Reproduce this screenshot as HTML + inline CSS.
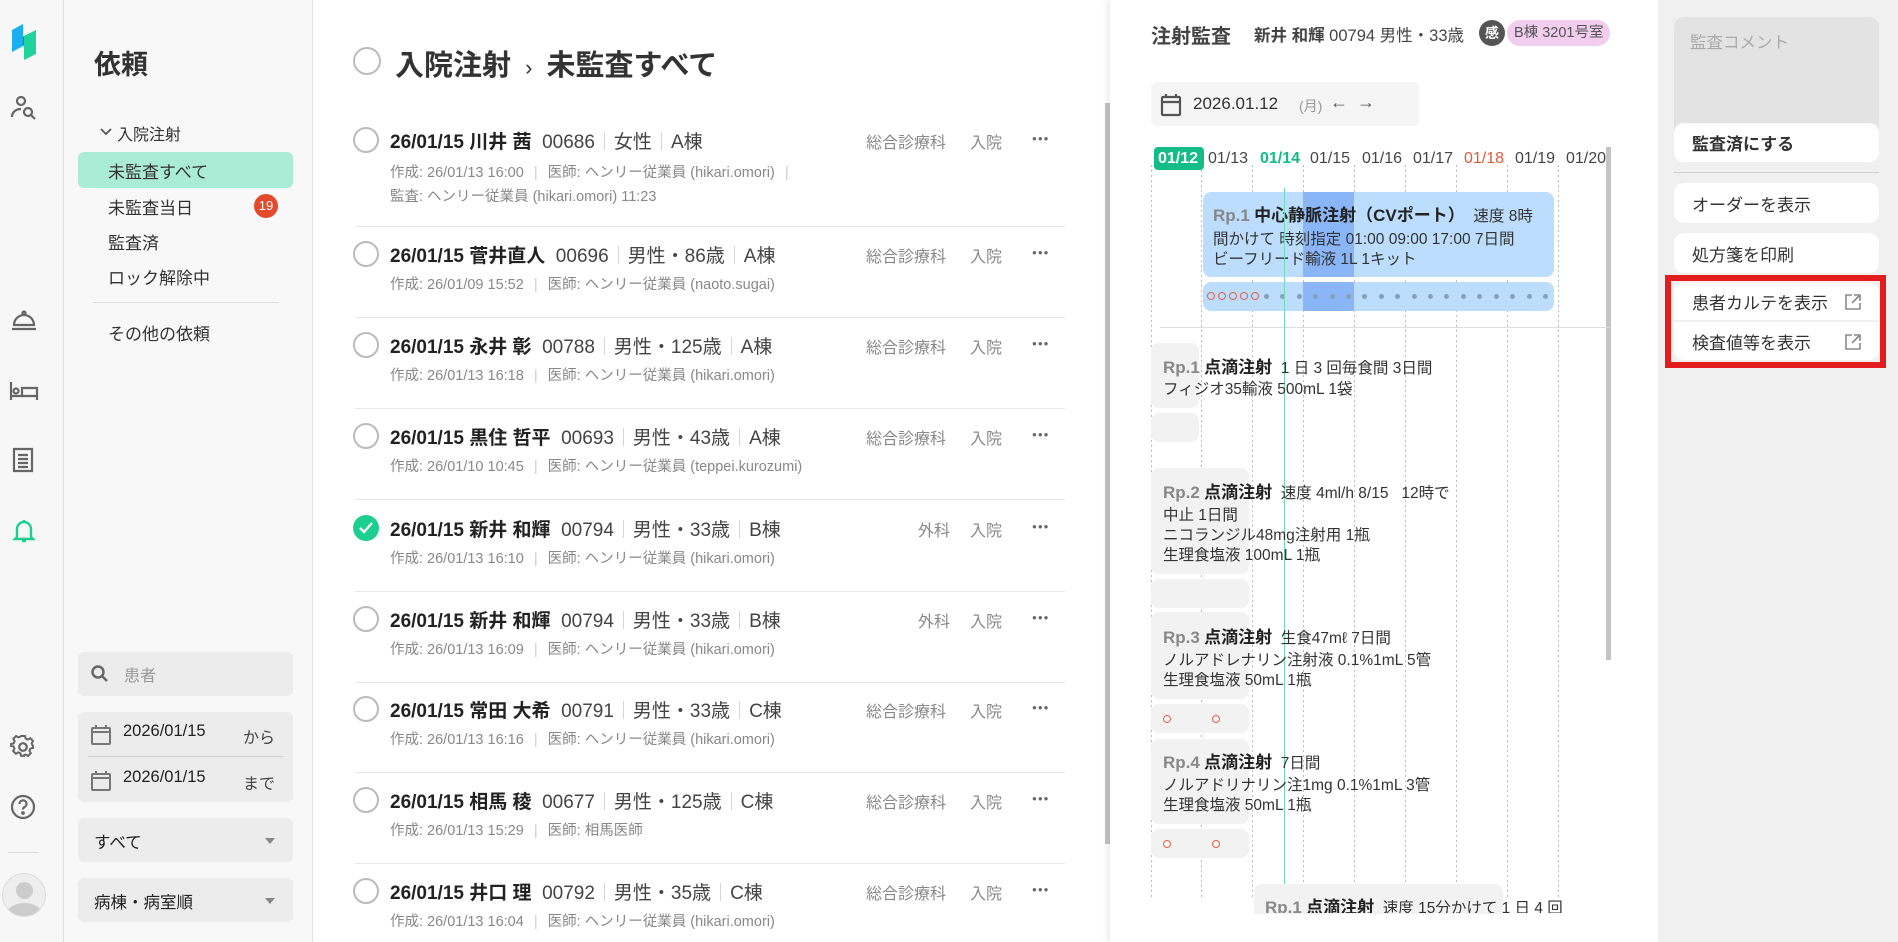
<!DOCTYPE html>
<html><head><meta charset="utf-8"><style>
*{box-sizing:border-box;margin:0;padding:0}
body{width:1898px;height:942px;overflow:hidden;font-family:"Liberation Sans","Noto Sans CJK JP",sans-serif;color:#333;background:#fff;position:relative}
.a{position:absolute;white-space:nowrap}
.rail{left:0;top:0;width:64px;height:942px;background:#f7f7f7;border-right:1px solid #e0e0e0}
.side{left:64px;top:0;width:249px;height:942px;background:#f8f8f8;border-right:1px solid #e3e3e3}
.it{font-size:17px;color:#333}
.box{background:#ececec;border-radius:6px}
.row-t{font-size:19px;font-weight:bold;color:#222}
.row-t span{font-weight:normal;color:#444}
.sep{display:inline-block;width:1px;height:18px;background:#d5d5d5;margin:0 9px;vertical-align:-2px}
.msep{color:#ccc;margin:0 6px}
.meta{font-size:14.5px;color:#888}
.hr{height:1px;background:#e8e8e8;left:355px;width:710px}
.circ{width:26px;height:26px;border:2px solid #bbb;border-radius:50%}
.dept{font-size:16px;color:#888}
.dots{font-size:8px;color:#666;letter-spacing:1px}
.dl{width:1px;top:175px;height:735px;background:repeating-linear-gradient(#bbb 0 2px,transparent 2px 5px)}
.card{background:#f2f2f2;border-radius:8px}
.ct{font-size:15.5px;color:#333}
.rp{font-weight:bold;color:#888;font-size:17px}
.rpn{font-weight:bold;color:#222;font-size:17px}
.rb{background:#fff;border-radius:10px;font-size:17px;color:#333;padding-left:18px;display:flex;align-items:center}
.oc{width:8px;height:8px;border:1.5px solid #e0604a;border-radius:50%}
.bd{width:5px;height:5px;border-radius:50%;background:#8aa0b8}
</style></head><body>
<div class="a rail"></div>
<svg class="a" style="left:11px;top:22px" width="26" height="40" viewBox="0 0 26 40"><path d="M1 8 L12 2 V24 L1 30Z" fill="#1ab0f0"/><path d="M13 14 L25 8 V32 L13 38Z" fill="#1fd39a"/><path d="M13 14 L12 14.5 V24 L13 23.5Z" fill="#168a7a"/></svg>
<svg class="a" style="left:10px;top:95px" width="28" height="26" viewBox="0 0 28 26" fill="none" stroke="#666" stroke-width="2.2"><circle cx="11" cy="6" r="4"/><path d="M2 22c0-5 4-8 9-8"/><circle cx="18" cy="17" r="4"/><path d="M21 20l4 4"/></svg>
<svg class="a" style="left:10px;top:310px" width="28" height="22" viewBox="0 0 28 22" fill="none" stroke="#666" stroke-width="2.2"><circle cx="14" cy="3" r="1.5"/><path d="M4 15a10 10 0 0 1 20 0z"/><path d="M2 19h24"/></svg>
<svg class="a" style="left:9px;top:380px" width="30" height="22" viewBox="0 0 30 22" fill="none" stroke="#666" stroke-width="2.2"><path d="M2 2v18M2 16h26M28 20V8H13v8"/><circle cx="7" cy="11" r="2.5"/></svg>
<svg class="a" style="left:12px;top:447px" width="22" height="26" viewBox="0 0 22 26" fill="none" stroke="#666" stroke-width="2.2"><path d="M2 2h18v22H2z"/><path d="M6 8h10M6 12h10M6 16h10M6 20h10"/></svg>
<svg class="a" style="left:12px;top:518px" width="24" height="26" viewBox="0 0 24 26" fill="none" stroke="#1ccf8f" stroke-width="2.4"><path d="M5 19V11a7 7 0 0 1 14 0v8l2 2H3z"/><path d="M10 23h4"/><path d="M12 2v2"/></svg>
<svg class="a" style="left:10px;top:734px" width="26" height="26" viewBox="0 0 24 24" fill="none" stroke="#666" stroke-width="2"><circle cx="12" cy="12" r="3.5"/><path d="M10 2h4l.6 2.6 2.3 1 2.3-1.4 2.8 2.8-1.4 2.3 1 2.3L22 12v2l-2.6.6-1 2.3 1.4 2.3-2.8 2.8-2.3-1.4-2.3 1L14 22h-4l-.6-2.6-2.3-1-2.3 1.4-2.8-2.8 1.4-2.3-1-2.3L0 12v-2l2.6-.6 1-2.3L2.2 4.8 5 2 7.3 3.4l2.3-1z" transform="translate(1 0) scale(.92)"/></svg>
<svg class="a" style="left:10px;top:794px" width="26" height="26" viewBox="0 0 26 26" fill="none" stroke="#666" stroke-width="2.2"><circle cx="13" cy="13" r="11"/><path d="M9.5 10a3.5 3.5 0 1 1 5 3c-1.2.6-1.5 1.3-1.5 2.5"/><circle cx="13" cy="19" r=".8" fill="#666"/></svg>
<div class="a" style="left:8px;top:852px;width:30px;height:1px;background:#ddd"></div>
<div class="a" style="left:2px;top:873px;width:44px;height:44px;border-radius:50%;background:#eee;border:1px solid #ddd;overflow:hidden"><div style="position:absolute;left:13px;top:8px;width:17px;height:17px;border-radius:50%;background:#ccc"></div><div style="position:absolute;left:4px;top:29px;width:35px;height:22px;border-radius:50%;background:#ccc"></div></div>

<div class="a side"></div>
<div class="a" style="left:94px;top:43px;font-size:27px;font-weight:bold;color:#333">依頼</div>
<svg class="a" style="left:100px;top:127px" width="12" height="10" viewBox="0 0 12 10" fill="none" stroke="#555" stroke-width="1.8"><path d="M1 2l5 5 5-5"/></svg>
<div class="a it" style="left:117px;top:121px;font-size:16px">入院注射</div>
<div class="a" style="left:78px;top:152px;width:215px;height:36px;background:#abecd6;border-radius:6px"></div>
<div class="a it" style="left:108px;top:158px">未監査すべて</div>
<div class="a it" style="left:108px;top:194px">未監査当日</div>
<div class="a" style="left:254px;top:194px;width:24px;height:24px;border-radius:50%;background:#e24a2b;color:#fff;font-size:13px;text-align:center;line-height:24px">19</div>
<div class="a it" style="left:108px;top:229px">監査済</div>
<div class="a it" style="left:108px;top:264px">ロック解除中</div>
<div class="a" style="left:93px;top:302px;width:185px;height:1px;background:#ddd"></div>
<div class="a it" style="left:108px;top:320px">その他の依頼</div>

<div class="a box" style="left:78px;top:652px;width:215px;height:44px"></div>
<svg class="a" style="left:90px;top:664px" width="20" height="20" viewBox="0 0 20 20" fill="none" stroke="#666" stroke-width="2.4"><circle cx="8" cy="8" r="5.5"/><path d="M12 12l5 5"/></svg>
<div class="a" style="left:124px;top:662px;font-size:16px;color:#999">患者</div>
<div class="a box" style="left:78px;top:712px;width:215px;height:90px"></div>
<div class="a" style="left:88px;top:756px;width:195px;height:1px;background:#d0d0d0"></div>
<svg class="a" style="left:90px;top:724px" width="22" height="22" viewBox="0 0 22 22" fill="none" stroke="#777" stroke-width="2"><rect x="2" y="4" width="18" height="16" rx="1"/><path d="M2 8h18M6 1v4M16 1v4"/></svg>
<svg class="a" style="left:90px;top:770px" width="22" height="22" viewBox="0 0 22 22" fill="none" stroke="#777" stroke-width="2"><rect x="2" y="4" width="18" height="16" rx="1"/><path d="M2 8h18M6 1v4M16 1v4"/></svg>
<div class="a" style="left:123px;top:722px;font-size:16.5px;color:#222">2026/01/15</div>
<div class="a" style="left:243px;top:724px;font-size:16px;color:#444">から</div>
<div class="a" style="left:123px;top:768px;font-size:16.5px;color:#222">2026/01/15</div>
<div class="a" style="left:243px;top:770px;font-size:16px;color:#444">まで</div>
<div class="a box" style="left:78px;top:818px;width:215px;height:44px"></div>
<div class="a" style="left:94px;top:829px;font-size:16.5px;color:#222">すべて</div>
<div class="a" style="left:265px;top:838px;border:5px solid transparent;border-top:6px solid #888"></div>
<div class="a box" style="left:78px;top:878px;width:215px;height:44px"></div>
<div class="a" style="left:94px;top:889px;font-size:16.5px;color:#222">病棟・病室順</div>
<div class="a" style="left:265px;top:898px;border:5px solid transparent;border-top:6px solid #888"></div>

<div class="a circ" style="left:353px;top:47px;width:28px;height:28px"></div>
<div class="a" style="left:395px;top:42px;font-size:29px;font-weight:bold;color:#333">入院注射 <span style="font-weight:normal;font-size:22px;margin:0 6px">›</span> 未監査すべて</div>
<div class="a" style="left:1105px;top:103px;width:5px;height:741px;background:#c4c4c4"></div>

<!-- rows -->
<div class="a circ" style="left:353px;top:127px"></div>
<div class="a row-t" style="left:390px;top:127px">26/01/15 川井 茜 <span>&nbsp;00686<i class="sep"></i>女性<i class="sep"></i>A棟</span></div>
<div class="a meta" style="left:390px;top:161px">作成: 26/01/13 16:00 <span class="msep">|</span> 医師: ヘンリー従業員 (hikari.omori) <span class="msep">|</span></div>
<div class="a meta" style="left:390px;top:185px">監査: ヘンリー従業員 (hikari.omori) 11:23</div>
<div class="a hr" style="top:226px"></div>

<div class="a circ" style="left:353px;top:241px"></div>
<div class="a row-t" style="left:390px;top:241px">26/01/15 菅井直人 <span>&nbsp;00696<i class="sep"></i>男性・86歳<i class="sep"></i>A棟</span></div>
<div class="a meta" style="left:390px;top:273px">作成: 26/01/09 15:52 <span class="msep">|</span> 医師: ヘンリー従業員 (naoto.sugai)</div>
<div class="a hr" style="top:317px"></div>

<div class="a circ" style="left:353px;top:332px"></div>
<div class="a row-t" style="left:390px;top:332px">26/01/15 永井 彰 <span>&nbsp;00788<i class="sep"></i>男性・125歳<i class="sep"></i>A棟</span></div>
<div class="a meta" style="left:390px;top:364px">作成: 26/01/13 16:18 <span class="msep">|</span> 医師: ヘンリー従業員 (hikari.omori)</div>
<div class="a hr" style="top:408px"></div>

<div class="a circ" style="left:353px;top:423px"></div>
<div class="a row-t" style="left:390px;top:423px">26/01/15 黒住 哲平 <span>&nbsp;00693<i class="sep"></i>男性・43歳<i class="sep"></i>A棟</span></div>
<div class="a meta" style="left:390px;top:455px">作成: 26/01/10 10:45 <span class="msep">|</span> 医師: ヘンリー従業員 (teppei.kurozumi)</div>
<div class="a hr" style="top:499px"></div>

<div class="a" style="left:353px;top:515px;width:26px;height:26px;border-radius:50%;background:#1ccf8f"></div>
<svg class="a" style="left:359px;top:522px" width="14" height="12" viewBox="0 0 14 12" fill="none" stroke="#fff" stroke-width="2.4"><path d="M1 6l4 4 8-9"/></svg>
<div class="a row-t" style="left:390px;top:515px">26/01/15 新井 和輝 <span>&nbsp;00794<i class="sep"></i>男性・33歳<i class="sep"></i>B棟</span></div>
<div class="a meta" style="left:390px;top:547px">作成: 26/01/13 16:10 <span class="msep">|</span> 医師: ヘンリー従業員 (hikari.omori)</div>
<div class="a hr" style="top:591px"></div>

<div class="a circ" style="left:353px;top:606px"></div>
<div class="a row-t" style="left:390px;top:606px">26/01/15 新井 和輝 <span>&nbsp;00794<i class="sep"></i>男性・33歳<i class="sep"></i>B棟</span></div>
<div class="a meta" style="left:390px;top:638px">作成: 26/01/13 16:09 <span class="msep">|</span> 医師: ヘンリー従業員 (hikari.omori)</div>
<div class="a hr" style="top:682px"></div>

<div class="a circ" style="left:353px;top:696px"></div>
<div class="a row-t" style="left:390px;top:696px">26/01/15 常田 大希 <span>&nbsp;00791<i class="sep"></i>男性・33歳<i class="sep"></i>C棟</span></div>
<div class="a meta" style="left:390px;top:728px">作成: 26/01/13 16:16 <span class="msep">|</span> 医師: ヘンリー従業員 (hikari.omori)</div>
<div class="a hr" style="top:772px"></div>

<div class="a circ" style="left:353px;top:787px"></div>
<div class="a row-t" style="left:390px;top:787px">26/01/15 相馬 稜 <span>&nbsp;00677<i class="sep"></i>男性・125歳<i class="sep"></i>C棟</span></div>
<div class="a meta" style="left:390px;top:819px">作成: 26/01/13 15:29 <span class="msep">|</span> 医師: 相馬医師</div>
<div class="a hr" style="top:863px"></div>

<div class="a circ" style="left:353px;top:878px"></div>
<div class="a row-t" style="left:390px;top:878px">26/01/15 井口 理 <span>&nbsp;00792<i class="sep"></i>男性・35歳<i class="sep"></i>C棟</span></div>
<div class="a meta" style="left:390px;top:910px">作成: 26/01/13 16:04 <span class="msep">|</span> 医師: ヘンリー従業員 (hikari.omori)</div>

<div class="a dept" style="left:866px;top:129px">総合診療科</div><div class="a dept" style="left:970px;top:129px">入院</div><div class="a dots" style="left:1032px;top:134px">●●●</div>
<div class="a dept" style="left:866px;top:243px">総合診療科</div><div class="a dept" style="left:970px;top:243px">入院</div><div class="a dots" style="left:1032px;top:248px">●●●</div>
<div class="a dept" style="left:866px;top:334px">総合診療科</div><div class="a dept" style="left:970px;top:334px">入院</div><div class="a dots" style="left:1032px;top:339px">●●●</div>
<div class="a dept" style="left:866px;top:425px">総合診療科</div><div class="a dept" style="left:970px;top:425px">入院</div><div class="a dots" style="left:1032px;top:430px">●●●</div>
<div class="a dept" style="left:918px;top:517px">外科</div><div class="a dept" style="left:970px;top:517px">入院</div><div class="a dots" style="left:1032px;top:522px">●●●</div>
<div class="a dept" style="left:918px;top:608px">外科</div><div class="a dept" style="left:970px;top:608px">入院</div><div class="a dots" style="left:1032px;top:613px">●●●</div>
<div class="a dept" style="left:866px;top:698px">総合診療科</div><div class="a dept" style="left:970px;top:698px">入院</div><div class="a dots" style="left:1032px;top:703px">●●●</div>
<div class="a dept" style="left:866px;top:789px">総合診療科</div><div class="a dept" style="left:970px;top:789px">入院</div><div class="a dots" style="left:1032px;top:794px">●●●</div>
<div class="a dept" style="left:866px;top:880px">総合診療科</div><div class="a dept" style="left:970px;top:880px">入院</div><div class="a dots" style="left:1032px;top:885px">●●●</div>

<!-- detail panel -->
<div class="a" style="left:1110px;top:0;width:548px;height:942px;background:#fff;box-shadow:-3px 0 6px rgba(0,0,0,.08)"></div>
<div class="a" style="left:1151px;top:20px;font-size:20px;font-weight:bold;color:#444">注射監査</div>
<div class="a" style="left:1254px;top:22px;font-size:16.5px;color:#444"><b>新井 和輝</b> 00794 男性・33歳</div>
<div class="a" style="left:1479px;top:20px;width:26px;height:26px;border-radius:13px;background:#555;color:#fff;font-size:14px;text-align:center;line-height:26px;font-weight:bold">感</div>
<div class="a" style="left:1507px;top:20px;height:26px;padding:0 7px;border-radius:13px;background:#f2cdee;color:#555;font-size:14.5px;line-height:26px">B棟 3201号室</div>
<div class="a" style="left:1151px;top:82px;width:268px;height:44px;background:#f5f5f5;border-radius:6px"></div>
<svg class="a" style="left:1160px;top:93px" width="22" height="24" viewBox="0 0 22 24" fill="none" stroke="#555" stroke-width="2.2"><rect x="2" y="4" width="18" height="18" rx="1"/><path d="M2 9h18M6 1v4M16 1v4"/></svg>
<div class="a" style="left:1193px;top:94px;font-size:17px;color:#333">2026.01.12</div>
<div class="a" style="left:1299px;top:96px;font-size:14px;color:#999">(月)</div>
<div class="a" style="left:1330px;top:92px;font-size:18px;color:#555">←</div>
<div class="a" style="left:1357px;top:92px;font-size:18px;color:#555">→</div>

<div class="a" style="left:1606px;top:147px;width:5px;height:513px;background:#c4c4c4"></div>
<div class="a dl" style="left:1151px;top:165px"></div><div class="a dl" style="left:1201px;top:165px"></div><div class="a dl" style="left:1252px;top:165px"></div><div class="a dl" style="left:1303px;top:165px"></div><div class="a dl" style="left:1354px;top:165px"></div><div class="a dl" style="left:1405px;top:165px"></div><div class="a dl" style="left:1456px;top:165px"></div><div class="a dl" style="left:1507px;top:165px"></div><div class="a dl" style="left:1558px;top:165px"></div>
<div class="a" style="left:1154px;top:147px;width:50px;height:23px;background:#13bd85;border-radius:4px"></div>
<div class="a" style="left:1158px;top:148px;font-size:16px;width:1000px;color:#444;line-height:21px">
<span style="position:absolute;left:0;color:#fff;font-weight:bold">01/12</span><span style="position:absolute;left:50px">01/13</span><span style="position:absolute;left:102px;color:#13bd85;font-weight:bold">01/14</span><span style="position:absolute;left:152px">01/15</span><span style="position:absolute;left:204px">01/16</span><span style="position:absolute;left:255px">01/17</span><span style="position:absolute;left:306px;color:#e05a3a">01/18</span><span style="position:absolute;left:357px">01/19</span><span style="position:absolute;left:408px">01/20</span></div>

<div class="a" style="left:1203px;top:192px;width:351px;height:85px;background:#bcddfd;border-radius:8px"></div>
<div class="a" style="left:1303px;top:192px;width:51px;height:85px;background:#8ab6f8"></div>
<div class="a" style="left:1203px;top:282px;width:351px;height:29px;background:#bcddfd;border-radius:8px"></div>
<div class="a" style="left:1303px;top:282px;width:51px;height:29px;background:#8ab6f8"></div>
<div class="a ct" style="left:1213px;top:201px"><span class="rp">Rp.1</span> <span class="rpn">中心静脈注射（CVポート）</span> &nbsp;速度 8時</div>
<div class="a ct" style="left:1213px;top:227px">間かけて 時刻指定 01:00 09:00 17:00 7日間</div>
<div class="a ct" style="left:1213px;top:247px">ビーフリード輸液 1L 1キット</div>
<div class="a oc" style="left:1207px;top:292px"></div><div class="a oc" style="left:1218px;top:292px"></div><div class="a oc" style="left:1229px;top:292px"></div><div class="a oc" style="left:1240px;top:292px"></div><div class="a oc" style="left:1251px;top:292px"></div>
<div class="a" style="left:1264px;top:294px;width:284px;display:flex;justify-content:space-between"><i class="bd"></i><i class="bd"></i><i class="bd"></i><i class="bd"></i><i class="bd"></i><i class="bd"></i><i class="bd"></i><i class="bd"></i><i class="bd"></i><i class="bd"></i><i class="bd"></i><i class="bd"></i><i class="bd"></i><i class="bd"></i><i class="bd"></i><i class="bd"></i><i class="bd"></i><i class="bd"></i></div>
<div class="a" style="left:1160px;top:327px;width:450px;height:1px;background:#ddd"></div>
<div class="a" style="left:1284px;top:188px;width:1px;height:724px;background:#6fdcb8"></div>

<div class="a card" style="left:1151px;top:343px;width:48px;height:65px"></div>
<div class="a card" style="left:1151px;top:413px;width:48px;height:29px"></div>
<div class="a ct" style="left:1163px;top:353px"><span class="rp">Rp.1</span> <span class="rpn">点滴注射</span> &nbsp;1 日 3 回毎食間 3日間</div>
<div class="a ct" style="left:1163px;top:377px">フィジオ35輸液 500mL 1袋</div>
<div class="a card" style="left:1151px;top:468px;width:98px;height:106px"></div>
<div class="a card" style="left:1151px;top:579px;width:98px;height:29px"></div>
<div class="a ct" style="left:1163px;top:478px"><span class="rp">Rp.2</span> <span class="rpn">点滴注射</span> &nbsp;速度 4ml/h 8/15 &nbsp; 12時で</div>
<div class="a ct" style="left:1163px;top:503px">中止 1日間</div>
<div class="a ct" style="left:1163px;top:523px">ニコランジル48mg注射用 1瓶</div>
<div class="a ct" style="left:1163px;top:543px">生理食塩液 100mL 1瓶</div>
<div class="a card" style="left:1151px;top:612px;width:98px;height:87px"></div>
<div class="a card" style="left:1151px;top:704px;width:98px;height:29px"></div>
<div class="a ct" style="left:1163px;top:623px"><span class="rp">Rp.3</span> <span class="rpn">点滴注射</span> &nbsp;生食47mℓ 7日間</div>
<div class="a ct" style="left:1163px;top:648px">ノルアドレナリン注射液 0.1%1mL 5管</div>
<div class="a ct" style="left:1163px;top:668px">生理食塩液 50mL 1瓶</div>
<div class="a oc" style="left:1163px;top:715px"></div><div class="a oc" style="left:1212px;top:715px"></div>
<div class="a card" style="left:1151px;top:739px;width:98px;height:85px"></div>
<div class="a card" style="left:1151px;top:829px;width:98px;height:29px"></div>
<div class="a ct" style="left:1163px;top:748px"><span class="rp">Rp.4</span> <span class="rpn">点滴注射</span> &nbsp;7日間</div>
<div class="a ct" style="left:1163px;top:773px">ノルアドリナリン注1mg 0.1%1mL 3管</div>
<div class="a ct" style="left:1163px;top:793px">生理食塩液 50mL 1瓶</div>
<div class="a oc" style="left:1163px;top:840px"></div><div class="a oc" style="left:1212px;top:840px"></div>
<div class="a card" style="left:1254px;top:884px;width:249px;height:30px;border-radius:8px 8px 0 0"></div>
<div class="a ct" style="left:1265px;top:893px;height:20px;overflow:hidden"><span class="rp">Rp.1</span> <span class="rpn">点滴注射</span> &nbsp;速度 15分かけて 1 日 4 回</div>
<div class="a" style="left:1110px;top:914px;width:548px;height:28px;background:#fff"></div>

<!-- right panel -->
<div class="a" style="left:1658px;top:0;width:240px;height:942px;background:#f0f0f0"></div>
<div class="a" style="left:1674px;top:17px;width:205px;height:144px;background:#e3e3e3;border-radius:10px"></div>
<div class="a" style="left:1690px;top:29px;font-size:16.5px;color:#aaa">監査コメント</div>
<div class="a rb" style="left:1674px;top:123px;width:205px;height:39px;font-weight:bold">監査済にする</div>
<div class="a" style="left:1674px;top:172px;width:205px;height:1px;background:#d0d0d0"></div>
<div class="a rb" style="left:1674px;top:183px;width:205px;height:40px">オーダーを表示</div>
<div class="a rb" style="left:1674px;top:233px;width:205px;height:40px">処方箋を印刷</div>
<div class="a" style="left:1665px;top:275px;width:221px;height:93px;border:6px solid #e31d1d"></div>
<div class="a rb" style="left:1674px;top:283px;width:205px;height:37px;border-radius:10px 10px 0 0">患者カルテを表示</div>
<div class="a rb" style="left:1674px;top:322px;width:205px;height:38px;border-radius:0 0 10px 10px">検査値等を表示</div>
<svg class="a" style="left:1845px;top:294px" width="16" height="16" viewBox="0 0 16 16" fill="none" stroke="#888" stroke-width="1.6"><path d="M7 1H1v14h14V9M9 1h6v6M15 1L7 9"/></svg>
<svg class="a" style="left:1845px;top:334px" width="16" height="16" viewBox="0 0 16 16" fill="none" stroke="#888" stroke-width="1.6"><path d="M7 1H1v14h14V9M9 1h6v6M15 1L7 9"/></svg>
</body></html>
